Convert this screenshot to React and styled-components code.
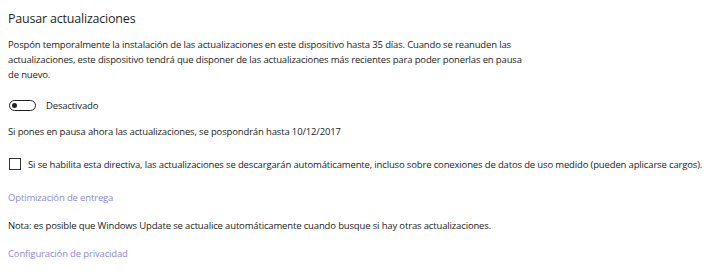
import React, { useState } from 'react'
import styled, { createGlobalStyle } from 'styled-components'

const GlobalStyle = createGlobalStyle`
  html, body {
    margin: 0;
    padding: 0;
    background: #ffffff;
  }
  body {
    font-family: 'Open Sans', 'Noto Sans', sans-serif;
    color: #1b1b1b;
  }
`

const Page = styled.div`
  display: flex;
  flex-direction: column;
  align-items: flex-start;
  padding: 9px 8px 0;
  width: 720px;
  height: 275px;
  box-sizing: border-box;
  overflow: hidden;
`

const Title = styled.h2`
  margin: 0;
  font-size: 12.5px;
  letter-spacing: -0.2px;
  line-height: 20px;
  font-weight: 400;
  color: #1f1f1f;
`

const Text = styled.p`
  margin: ${({ $top }) => $top}px 0 0;
  font-size: 9.5px;
  letter-spacing: -0.15px;
  line-height: 15px;
  color: #1b1b1b;
  white-space: nowrap;
`

const Link = styled.a`
  margin-top: ${({ $top }) => $top}px;
  font-size: 9.5px;
  letter-spacing: -0.15px;
  line-height: 15px;
  color: #8e88dc;
  text-decoration: none;
  cursor: pointer;
`

const ToggleRow = styled.label`
  display: flex;
  align-items: center;
  gap: 10px;
  margin-top: 13px;
  height: 20px;
  padding-left: 1px;
  font-size: 9.5px;
  letter-spacing: -0.15px;
  color: #1b1b1b;
  cursor: pointer;
`

const Switch = styled.span`
  display: flex;
  align-items: center;
  box-sizing: border-box;
  width: 27px;
  height: 11px;
  border: 1.5px solid #222;
  border-radius: 6px;
  padding: 0 2px;
  justify-content: ${({ $on }) => ($on ? 'flex-end' : 'flex-start')};
  background: ${({ $on }) => ($on ? '#222' : '#fff')};

  &::after {
    content: '';
    width: 5px;
    height: 5px;
    border-radius: 50%;
    background: ${({ $on }) => ($on ? '#fff' : '#222')};
  }
`

const CheckRow = styled.label`
  display: flex;
  align-items: center;
  gap: 7px;
  margin-top: 17px;
  height: 16px;
  padding-left: 1px;
  font-size: 9.5px;
  letter-spacing: -0.15px;
  color: #1b1b1b;
  white-space: nowrap;
  cursor: pointer;
`

const Box = styled.span`
  box-sizing: border-box;
  width: 12px;
  height: 12px;
  border: 1px solid #333;
  background: ${({ $on }) => ($on ? '#333' : '#fff')};
`

export default function App() {
  const [paused, setPaused] = useState(false)
  const [metered, setMetered] = useState(false)

  return (
    <Page>
      <GlobalStyle />
      <Title>Pausar actualizaciones</Title>
      <Text $top={8}>
        Pospón temporalmente la instalación de las actualizaciones en este dispositivo hasta 35 días. Cuando se reanuden las<br />
        actualizaciones, este dispositivo tendrá que disponer de las actualizaciones más recientes para poder ponerlas en pausa<br />
        de nuevo.
      </Text>
      <ToggleRow onClick={() => setPaused(p => !p)}>
        <Switch $on={paused} />
        {paused ? 'Activado' : 'Desactivado'}
      </ToggleRow>
      <Text $top={9}>Si pones en pausa ahora las actualizaciones, se pospondrán hasta 10/12/2017</Text>
      <CheckRow onClick={() => setMetered(m => !m)}>
        <Box $on={metered} />
        Si se habilita esta directiva, las actualizaciones se descargarán automáticamente, incluso sobre conexiones de datos de uso medido (pueden aplicarse cargos).
      </CheckRow>
      <Link $top={18}>Optimización de entrega</Link>
      <Text $top={13}>Nota: es posible que Windows Update se actualice automáticamente cuando busque si hay otras actualizaciones.</Text>
      <Link $top={13}>Configuración de privacidad</Link>
    </Page>
  )
}
